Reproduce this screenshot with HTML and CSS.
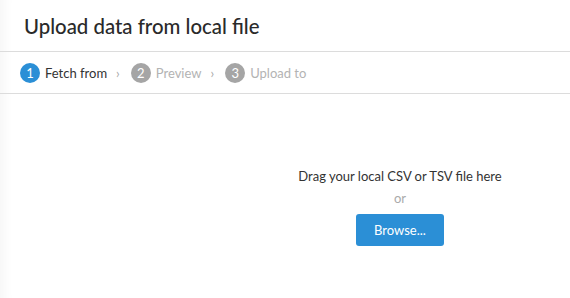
FILE: index.html
```html
<!DOCTYPE html>
<html lang="en">
<head>
    <meta charset="UTF-8">
    <title>Upload data from local file</title>
    <link rel="stylesheet" href="styles.css">
</head>
<body>
    <div class="header">
        <h1>Upload data from local file</h1>
    </div>

    <!-- Wizard steps -->
    <div class="steps">
        <div class="step active"><span class="num">1</span>Fetch from</div>
        <span class="sep">&rsaquo;</span>
        <div class="step"><span class="num">2</span>Preview</div>
        <span class="sep">&rsaquo;</span>
        <div class="step"><span class="num">3</span>Upload to</div>
    </div>

    <div class="content">
        <div class="spacer"></div>
        <div class="dropzone">
            <p class="dragText">Drag your local CSV or TSV file here</p>
            <p class="orText">or</p>
            <button class="browseButton">Browse...</button>
        </div>
    </div>
</body>
</html>
```

FILE: styles.css
```css
html, body {
    height: 100%;
}
body {
    margin: 0;
    font-family: Lato, "Noto Sans", sans-serif;
    color: #333;
    background-color: #fff;
    box-shadow: inset 14px 0 12px -10px rgba(0, 0, 0, 0.04);
}
.header {
    height: 52px;
    padding-left: 24px;
    border-bottom: 1px solid #dcdcdc;
    box-sizing: border-box;
    display: flex;
    align-items: center;
}
.header h1 {
    margin: 0;
    font-size: 20.4px;
    font-weight: 500;
    color: #2a2a2a;
}
.steps {
    height: 41px;
    padding-left: 20px;
    border-bottom: 1px solid #dcdcdc;
    display: flex;
    align-items: center;
    font-size: 13px;
    color: #b3b3b3;
}
.step {
    display: flex;
    align-items: center;
}
.step.active {
    color: #333;
}
.num {
    width: 20px;
    height: 20px;
    border-radius: 50%;
    background-color: #a5a5a5;
    color: #fff;
    font-size: 13px;
    display: flex;
    align-items: center;
    justify-content: center;
    margin-right: 5px;
}
.step.active .num {
    background-color: #2b8fd6;
}
.sep {
    margin: 0 11px 0 9px;
    font-size: 13px;
    color: #aaa;
}
.content {
    display: flex;
    padding-top: 73px;
}
.spacer {
    width: 230px;
}
.dropzone {
    flex: 1;
    text-align: center;
}
.dragText {
    margin: 0;
    font-size: 13px;
    line-height: 18px;
    color: #333;
}
.orText {
    margin: 4px 0 0;
    font-size: 13px;
    line-height: 18px;
    color: #aaa;
}
.browseButton {
    margin-top: 7px;
    width: 88px;
    height: 32px;
    border: none;
    border-radius: 3px;
    background-color: #2b8fd6;
    color: #fff;
    font-family: inherit;
    font-size: 13px;
    cursor: pointer;
}
```
